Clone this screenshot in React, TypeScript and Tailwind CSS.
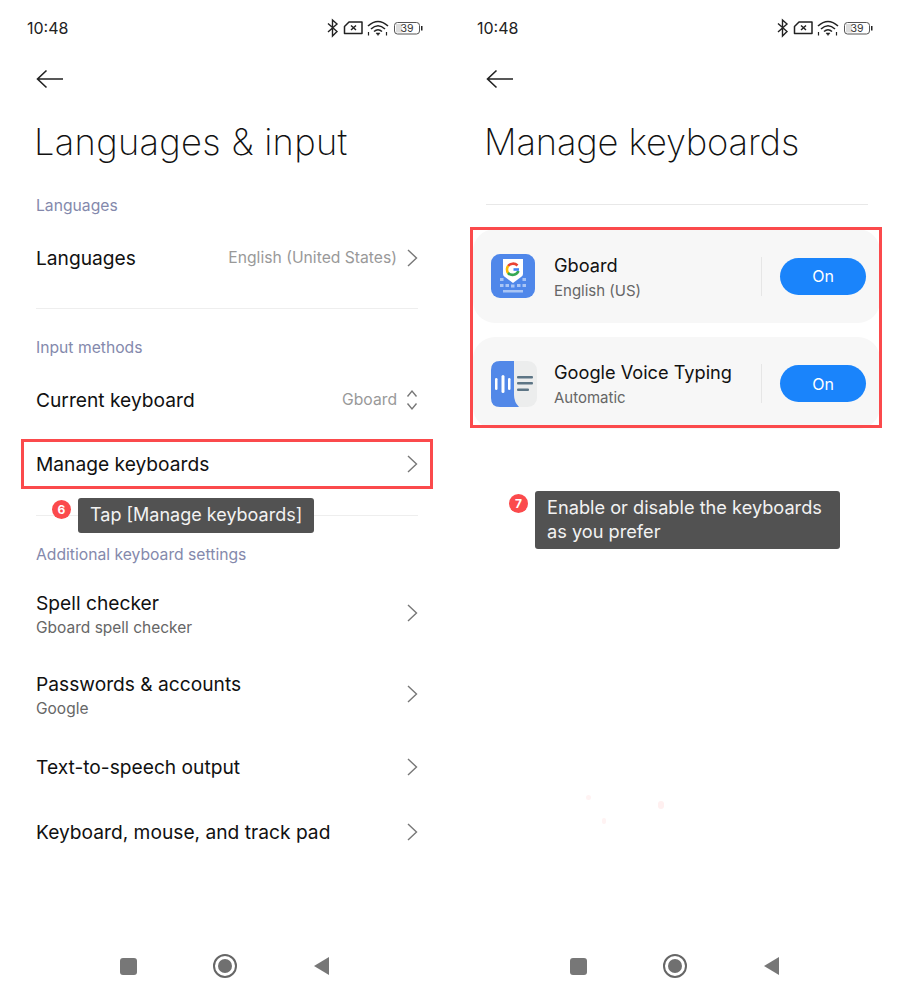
import React from "react";

const font = { fontFamily: "Inter, 'Noto Sans', sans-serif" };

function StatusBar() {
  return (
    <div className="h-[56px] pl-[27px] pr-[26px] flex items-center justify-between">
      <span className="text-[16px] text-[#222] leading-none">10:48</span>
      <svg width="98" height="20" viewBox="0 0 98 20" fill="none" stroke="#222">
        <path d="M2 5.500 L11 13.500 L6.500 18 V2 L11 6 L2 14" strokeWidth="1.400" />
        <path d="M23 4 H36 V15.500 H18.500 V8.500 Z" strokeWidth="1.500" strokeLinejoin="round" />
        <path d="M25 7.500 L30 12 M30 7.500 L25 12" strokeWidth="1.500" />
        <path d="M42 8 Q52 -1 62 8 M45 11 Q52 4.500 59 11 M48 13.500 Q52 10 56 13.500" strokeWidth="1.600" />
        <path d="M50 15 L54 15 L52 17.500 Z" fill="#222" strokeWidth="0.500" />
        <path d="M42.500 14 V17.500 M60.500 14 V17.500" strokeWidth="1.200" />
        <rect x="68.500" y="4.500" width="25" height="11.500" rx="3" strokeWidth="1" stroke="#555" />
        <rect x="70" y="6" width="6" height="8.500" fill="#ddd" stroke="none" />
        <text x="81" y="14" fontSize="10.500" textAnchor="middle" fill="#333" stroke="none">39</text>
        <rect x="95" y="8" width="1.500" height="4.500" fill="#222" stroke="none" />
      </svg>
    </div>
  );
}

function BackHeader({ title, tracking }: { title: string; tracking: string }) {
  return (
    <>
      <div className="h-[46px] pl-[36px] flex items-center">
        <svg width="28" height="20" viewBox="0 0 28 20" fill="none" stroke="#222" strokeWidth="1.600">
          <path d="M27 10 H2 M10.500 1.500 L1.500 10 L10.500 18.500" />
        </svg>
      </div>
      <div className="h-[79px] pl-[34px] pt-[2px] flex items-center">
        <h1 className={`text-[36.300px] font-extralight text-[#111] leading-none ${tracking}`}>{title}</h1>
      </div>
    </>
  );
}

function Chevron({ lift }: { lift?: boolean }) {
  return (
    <svg width="12" height="20" viewBox="0 0 12 20" fill="none" stroke="#777" strokeWidth="1.400" className={lift ? "shrink-0 -mt-[4px]" : "shrink-0"}>
      <path d="M2 2 L10.500 10 L2 18" />
    </svg>
  );
}

function Updown() {
  return (
    <svg width="12" height="22" viewBox="0 0 12 22" fill="none" stroke="#777" strokeWidth="1.400" className="shrink-0">
      <path d="M1.500 7.500 L6 2 L10.500 7.500 M1.500 14.500 L6 20 L10.500 14.500" />
    </svg>
  );
}

function Section({ label, h }: { label: string; h: number }) {
  return (
    <div className="flex items-center pt-[2px] text-[15.700px] text-[#8489ac] leading-none" style={{ height: h }}>
      {label}
    </div>
  );
}

function Row({ title, sub, value, h, updown }: { title: string; sub?: string; value?: string; h: number; updown?: boolean }) {
  return (
    <div className="flex items-center justify-between" style={{ height: h }}>
      <div className="flex flex-col">
        <span className="text-[19.200px] leading-[24px] text-[#111]">{title}</span>
        {sub && <span className="text-[15.500px] leading-[24px] mt-[1px] text-[#666]">{sub}</span>}
      </div>
      <div className="flex items-center gap-[9px]">
        {value && <span className="text-[15.700px] text-[#999]">{value}</span>}
        {updown ? <Updown /> : <Chevron lift={!!sub} />}
      </div>
    </div>
  );
}

function NavBar() {
  return (
    <div className="absolute bottom-[22px] left-[120px] w-[210px] h-[24px] flex items-center justify-between">
      <div className="w-[17px] h-[17px] rounded-[3px] bg-[#777]" />
      <div className="w-[24px] h-[24px] rounded-full border-[2px] border-[#666] flex items-center justify-center">
        <div className="w-[14px] h-[14px] rounded-full bg-[#707070]" />
      </div>
      <svg width="17" height="20" viewBox="0 0 17 20">
        <path d="M16 1 V19 L1 10 Z" fill="#777" />
      </svg>
    </div>
  );
}

function Callout({ n, children, badge, box }: { n: string; children: React.ReactNode; badge: string; box: string }) {
  return (
    <>
      <div className={`absolute w-[19px] h-[19px] rounded-full bg-[#fb4a4c] text-white text-[12px] font-bold flex items-center justify-center leading-none ${badge}`}>
        {n}
      </div>
      <div className={`absolute bg-[#525252] rounded-[3px] text-[#f2f2f2] ${box}`}>{children}</div>
    </>
  );
}

function GboardIcon() {
  return (
    <svg width="44" height="44" viewBox="0 0 44 44" className="shrink-0 block">
      <rect width="44" height="44" rx="9" fill="#4f87ea" />
      <path d="M12 5 H32 V20 Q32 22 30 23 L22 29 L14 23 Q12 22 12 20 Z" fill="#fff" />
      <g fill="none" strokeWidth="2.600">
        <path d="M26.500 11.500 A6.500 6.500 0 0 0 17 12" stroke="#ea4335" />
        <path d="M17.200 11.800 A6.500 6.500 0 0 0 17.200 19.200" stroke="#fbbc05" />
        <path d="M17 19 A6.500 6.500 0 0 0 27.500 17" stroke="#34a853" />
        <path d="M28 15.500 H22.500" stroke="#4285f4" />
      </g>
      <g fill="#a9c5f5">
        <rect x="9" y="24" width="3.500" height="3" />
        <rect x="31.500" y="24" width="3.500" height="3" />
        <rect x="9" y="30" width="3.500" height="3" />
        <rect x="14.500" y="30" width="3.500" height="3" />
        <rect x="20" y="30.500" width="3.500" height="3" />
        <rect x="26" y="30" width="3.500" height="3" />
        <rect x="31.500" y="30" width="3.500" height="3" />
        <rect x="12" y="36" width="20" height="2.500" />
      </g>
    </svg>
  );
}

function VoiceIcon() {
  return (
    <svg width="46" height="46" viewBox="0 0 46 46" className="shrink-0 block">
      <rect width="46" height="46" rx="9" fill="#eceded" />
      <path d="M9 0 H23 V34 Q23 41 28 46 H9 Q0 46 0 37 V9 Q0 0 9 0 Z" fill="#5288e8" />
      <g fill="#fff">
        <rect x="4" y="17" width="2.500" height="12" rx="1.250" />
        <rect x="10.500" y="14" width="3" height="18" rx="1.500" />
        <rect x="17" y="17" width="2.500" height="12" rx="1.250" />
      </g>
      <g fill="#5d7585">
        <rect x="26" y="15" width="16" height="2.500" rx="1" />
        <rect x="26" y="21" width="16" height="2.500" rx="1" />
        <rect x="26" y="27.500" width="12" height="2.500" rx="1" />
      </g>
    </svg>
  );
}

function KeyboardCard({ title, sub, icon, card, text }: { title: string; sub: string; icon: React.ReactNode; card: string; text: string }) {
  return (
    <div className={`bg-[#f7f7f7] rounded-[22px] pl-[18px] pr-[14px] flex items-center ${card}`}>
      <div className="w-[63px] shrink-0">{icon}</div>
      <div className={`flex-1 flex flex-col ${text}`}>
        <span className="text-[18.200px] leading-[26px] text-[#111]">{title}</span>
        <span className="text-[15px] leading-[26px] text-[#666]">{sub}</span>
      </div>
      <div className="w-px h-[39px] bg-[#e6e6e6] mr-[18px]" />
      <div className="w-[86px] h-[37px] rounded-full bg-[#1a84fb] text-white text-[16px] flex items-center justify-center">On</div>
    </div>
  );
}

export default function App() {
  return (
    <div className="w-[904px] h-[1000px] bg-white flex overflow-hidden" style={font}>
      <div className="relative w-[450px] h-[1000px]">
        <StatusBar />
        <BackHeader title="Languages & input" tracking="tracking-[0.300px]" />
        <div className="pl-[36px] pr-[32px]">
          <Section label="Languages" h={48} />
          <Row title="Languages" value="English (United States)" h={58} />
          <div className="h-[22px] border-b border-[#eeeeee]" />
          <Section label="Input methods" h={76} />
          <Row title="Current keyboard" value="Gboard" updown h={30} />
          <div className="h-[16px]" />
          <Row title="Manage keyboards" h={66} />
          <div className="h-[19px] border-b border-[#eeeeee]" />
          <Section label="Additional keyboard settings" h={75} />
          <Row title="Spell checker" sub="Gboard spell checker" h={48} />
          <div className="h-[33px]" />
          <Row title="Passwords & accounts" sub="Google" h={48} />
          <div className="h-[24px]" />
          <Row title="Text-to-speech output" h={46} />
          <div className="h-[18px]" />
          <Row title="Keyboard, mouse, and track pad" h={48} />
        </div>
        <NavBar />
        <div className="absolute left-[21px] top-[439px] w-[412px] h-[50px] border-[3px] border-[#fb4a4c]" />
        <Callout n="6" badge="left-[52px] top-[500px]" box="left-[78px] top-[498px] w-[236px] h-[35px] pl-[12px] text-[18px] leading-[33px] whitespace-nowrap">
          Tap [Manage keyboards]
        </Callout>
      </div>
      <div className="relative w-[450px] h-[1000px]">
        <StatusBar />
        <BackHeader title="Manage keyboards" tracking="tracking-[-0.150px]" />
        <div className="pl-[36px] pr-[32px] mt-[23px]">
          <div className="border-t border-[#e8e8e8]" />
        </div>
        <div className="ml-[23px] mr-[20px] mt-[24px] flex flex-col gap-[14px]">
          <KeyboardCard title="Gboard" sub="English (US)" icon={<GboardIcon />} card="h-[94px]" text="pt-[3px]" />
          <KeyboardCard title="Google Voice Typing" sub="Automatic" icon={<VoiceIcon />} card="h-[92px] pt-[1px]" text="pt-[3px]" />
        </div>
        <NavBar />
        <div className="absolute left-[20px] top-[227px] w-[412px] h-[201px] border-[3px] border-[#fb4a4c]" />
        <Callout n="7" badge="left-[59px] top-[494px]" box="left-[85px] top-[491px] w-[305px] h-[58px] pl-[12px] pt-[4px] text-[18.200px] leading-[24px]">
          Enable or disable the keyboards
          <br />
          as you prefer
        </Callout>
        <div className="absolute left-[136px] top-[795px] w-[5px] h-[5px] rounded-full bg-[#fff3f3]" />
        <div className="absolute left-[208px] top-[801px] w-[6px] h-[8px] rounded-full bg-[#fff0f0]" />
        <div className="absolute left-[152px] top-[818px] w-[4px] h-[6px] rounded-full bg-[#fff3f3]" />
      </div>
    </div>
  );
}
